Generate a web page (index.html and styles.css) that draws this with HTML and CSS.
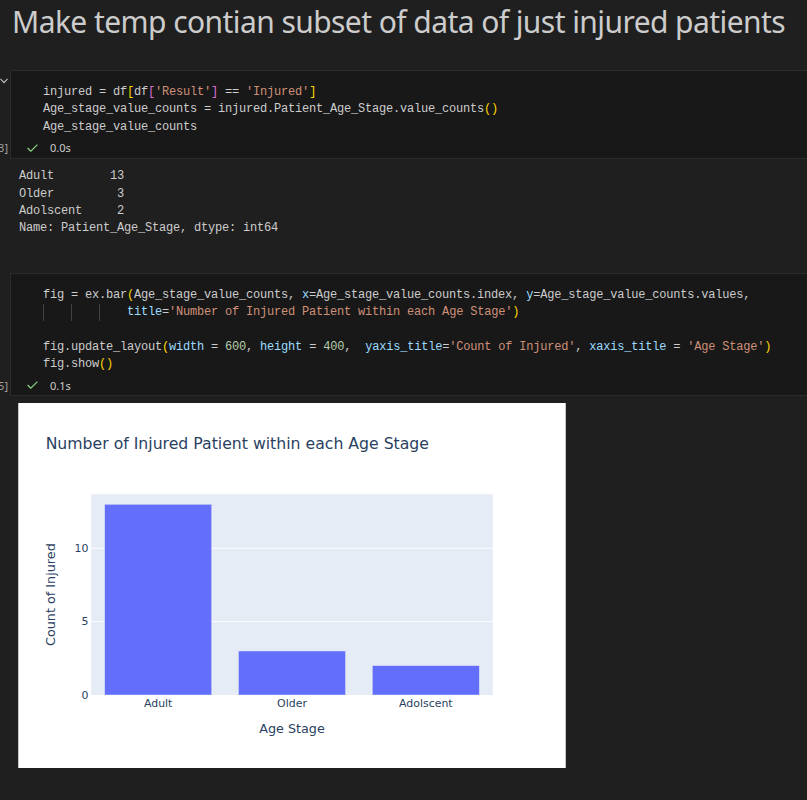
FILE: index.html
```html
<!DOCTYPE html>
<html>
<head>
<meta charset="utf-8">
<link rel="stylesheet" href="styles.css">
</head>
<body>
<div class="nb">
  <h1 class="md">Make temp contian subset of data of just injured patients</h1>

  <div class="cell-row first">
    <div class="gutter">
      <svg class="chev" width="9" height="6" viewBox="0 0 9 6"><polyline points="0.5,0.8 4,4.6 7.5,0.8" fill="none" stroke="#c5c5c5" stroke-width="1.1"/></svg>
      <div class="count"><span>[3]</span></div>
    </div>
    <div class="cell">
<pre class="code">injured = df<span class="b1">[</span>df<span class="b2">[</span><span class="s">'Result'</span><span class="b2">]</span> == <span class="s">'Injured'</span><span class="b1">]</span>
Age_stage_value_counts = injured.Patient_Age_Stage.value_counts<span class="b1">()</span>
Age_stage_value_counts</pre>
      <div class="status">
        <svg width="11" height="8" viewBox="0 0 11 8"><polyline points="0.6,4 3.8,7.2 10.4,0.6" fill="none" stroke="#89d185" stroke-width="1.2"/></svg>
        <span class="time">0.0s</span>
      </div>
    </div>
  </div>

<pre class="out">Adult        13
Older         3
Adolscent     2
Name: Patient_Age_Stage, dtype: int64</pre>

  <div class="cell-row second">
    <div class="gutter">
      <span class="chev-space"></span>
      <div class="count"><span>[5]</span></div>
    </div>
    <div class="cell">
<pre class="code">fig = ex.bar<span class="b1">(</span>Age_stage_value_counts, <span class="p">x</span>=Age_stage_value_counts.index, <span class="p">y</span>=Age_stage_value_counts.values,
<span class="ig">    </span><span class="ig">    </span><span class="ig">    </span><span class="p">title</span>=<span class="s">'Number of Injured Patient within each Age Stage'</span><span class="b1">)</span>

fig.update_layout<span class="b1">(</span><span class="p">width</span> = <span class="n">600</span>, <span class="p">height</span> = <span class="n">400</span>,  <span class="p">yaxis_title</span>=<span class="s">'Count of Injured'</span>, <span class="p">xaxis_title</span> = <span class="s">'Age Stage'</span><span class="b1">)</span>
fig.show<span class="b1">()</span></pre>
      <div class="status">
        <svg width="11" height="8" viewBox="0 0 11 8"><polyline points="0.6,4 3.8,7.2 10.4,0.6" fill="none" stroke="#89d185" stroke-width="1.2"/></svg>
        <span class="time">0.1s</span>
      </div>
    </div>
  </div>

  <div class="chart">
    <svg width="548" height="365" viewBox="0 0 600 400" font-family="'DejaVu Sans', Verdana, sans-serif">
      <rect x="0" y="0" width="600" height="400" fill="#ffffff"/>
      <rect x="80" y="100" width="440" height="220" fill="#e5ecf6"/>
      <line x1="80" y1="159.2" x2="520" y2="159.2" stroke="#ffffff" stroke-width="1"/>
      <line x1="80" y1="239.6" x2="520" y2="239.6" stroke="#ffffff" stroke-width="1"/>
      <rect x="94.67" y="110.99" width="117.33" height="209.01" fill="#636efa" stroke="#e5ecf6" stroke-width="0.5"/>
      <rect x="241.33" y="271.77" width="117.33" height="48.23" fill="#636efa" stroke="#e5ecf6" stroke-width="0.5"/>
      <rect x="388" y="287.85" width="117.33" height="32.15" fill="#636efa" stroke="#e5ecf6" stroke-width="0.5"/>
      <g fill="#2a3f5f" font-size="12" text-anchor="end">
        <text x="77" y="324.2">0</text>
        <text x="77" y="243.8">5</text>
        <text x="77" y="163.4">10</text>
      </g>
      <g fill="#2a3f5f" font-size="12" text-anchor="middle">
        <text x="153.33" y="333">Adult</text>
        <text x="300" y="333">Older</text>
        <text x="446.67" y="333">Adolscent</text>
      </g>
      <text x="300" y="361.5" fill="#2a3f5f" font-size="14" text-anchor="middle">Age Stage</text>
      <text x="40" y="210" fill="#2a3f5f" font-size="14" text-anchor="middle" transform="rotate(-90 40 210)">Count of Injured</text>
      <text x="30" y="50.7" fill="#2a3f5f" font-size="17.2">Number of Injured Patient within each Age Stage</text>
    </svg>
  </div>
</div>
</body>
</html>
```

FILE: styles.css
```css
html, body {
  margin: 0;
  padding: 0;
  background: #1f1f1f;
  overflow: hidden;
}

.nb {
  width: 807px;
  height: 800px;
}

.md {
  margin: 0;
  padding: 7px 0 0 12px;
  font-family: "Noto Sans", "Open Sans", sans-serif;
  font-weight: 400;
  font-size: 30px;
  line-height: 30px;
  letter-spacing: -0.57px;
  color: #cccccc;
  white-space: nowrap;
}

.cell-row {
  display: flex;
}

.cell-row.first {
  margin-top: 33px;
}

.cell-row.second {
  margin-top: 35px;
}

.gutter {
  width: 10px;
  flex: none;
  display: flex;
  flex-direction: column;
  justify-content: space-between;
  overflow: hidden;
  padding-top: 8px;
  padding-bottom: 1px;
}

.chev {
  display: block;
}

.chev-space {
  display: block;
  height: 6px;
}

.count {
  display: flex;
  justify-content: flex-end;
  height: 20px;
  align-items: center;
  font-family: "Noto Sans", sans-serif;
  font-size: 11px;
  color: #a0a0a0;
  white-space: nowrap;
}

.count span {
  flex: none;
  padding-right: 2px;
}

.cell {
  flex: 1;
  background: #181818;
  border: 1px solid #2b2b2b;
  border-right: none;
  margin-right: -20px;
}

.code {
  margin: 0;
  padding: 13px 0 0 32px;
  font-family: "Liberation Mono", "DejaVu Sans Mono", monospace;
  font-size: 12px;
  letter-spacing: -0.2px;
  line-height: 17.25px;
  color: #cccccc;
  white-space: pre;
}

.code .s { color: #ce9178; }
.code .n { color: #b5cea8; }
.code .p { color: #9cdcfe; }
.code .b1 { color: #ffd700; }
.code .b2 { color: #da70d6; }
.code .b3 { color: #179fff; }

.code .ig {
  display: inline-block;
  height: 17.25px;
  vertical-align: top;
  box-shadow: inset 1px 0 0 #404040;
}

.status {
  display: flex;
  align-items: center;
  height: 20px;
  margin-top: 2px;
  padding-left: 16px;
  gap: 12px;
}

.status svg {
  display: block;
}

.time {
  font-family: "Noto Sans", sans-serif;
  font-size: 11px;
  color: #cccccc;
}

.out {
  margin: 0;
  padding: 9.5px 0 0 19px;
  font-family: "Liberation Mono", "DejaVu Sans Mono", monospace;
  font-size: 12px;
  letter-spacing: -0.2px;
  line-height: 17.4px;
  color: #cccccc;
  white-space: pre;
}

.chart {
  margin: 7px 0 0 18px;
}

.chart svg {
  display: block;
}
```
